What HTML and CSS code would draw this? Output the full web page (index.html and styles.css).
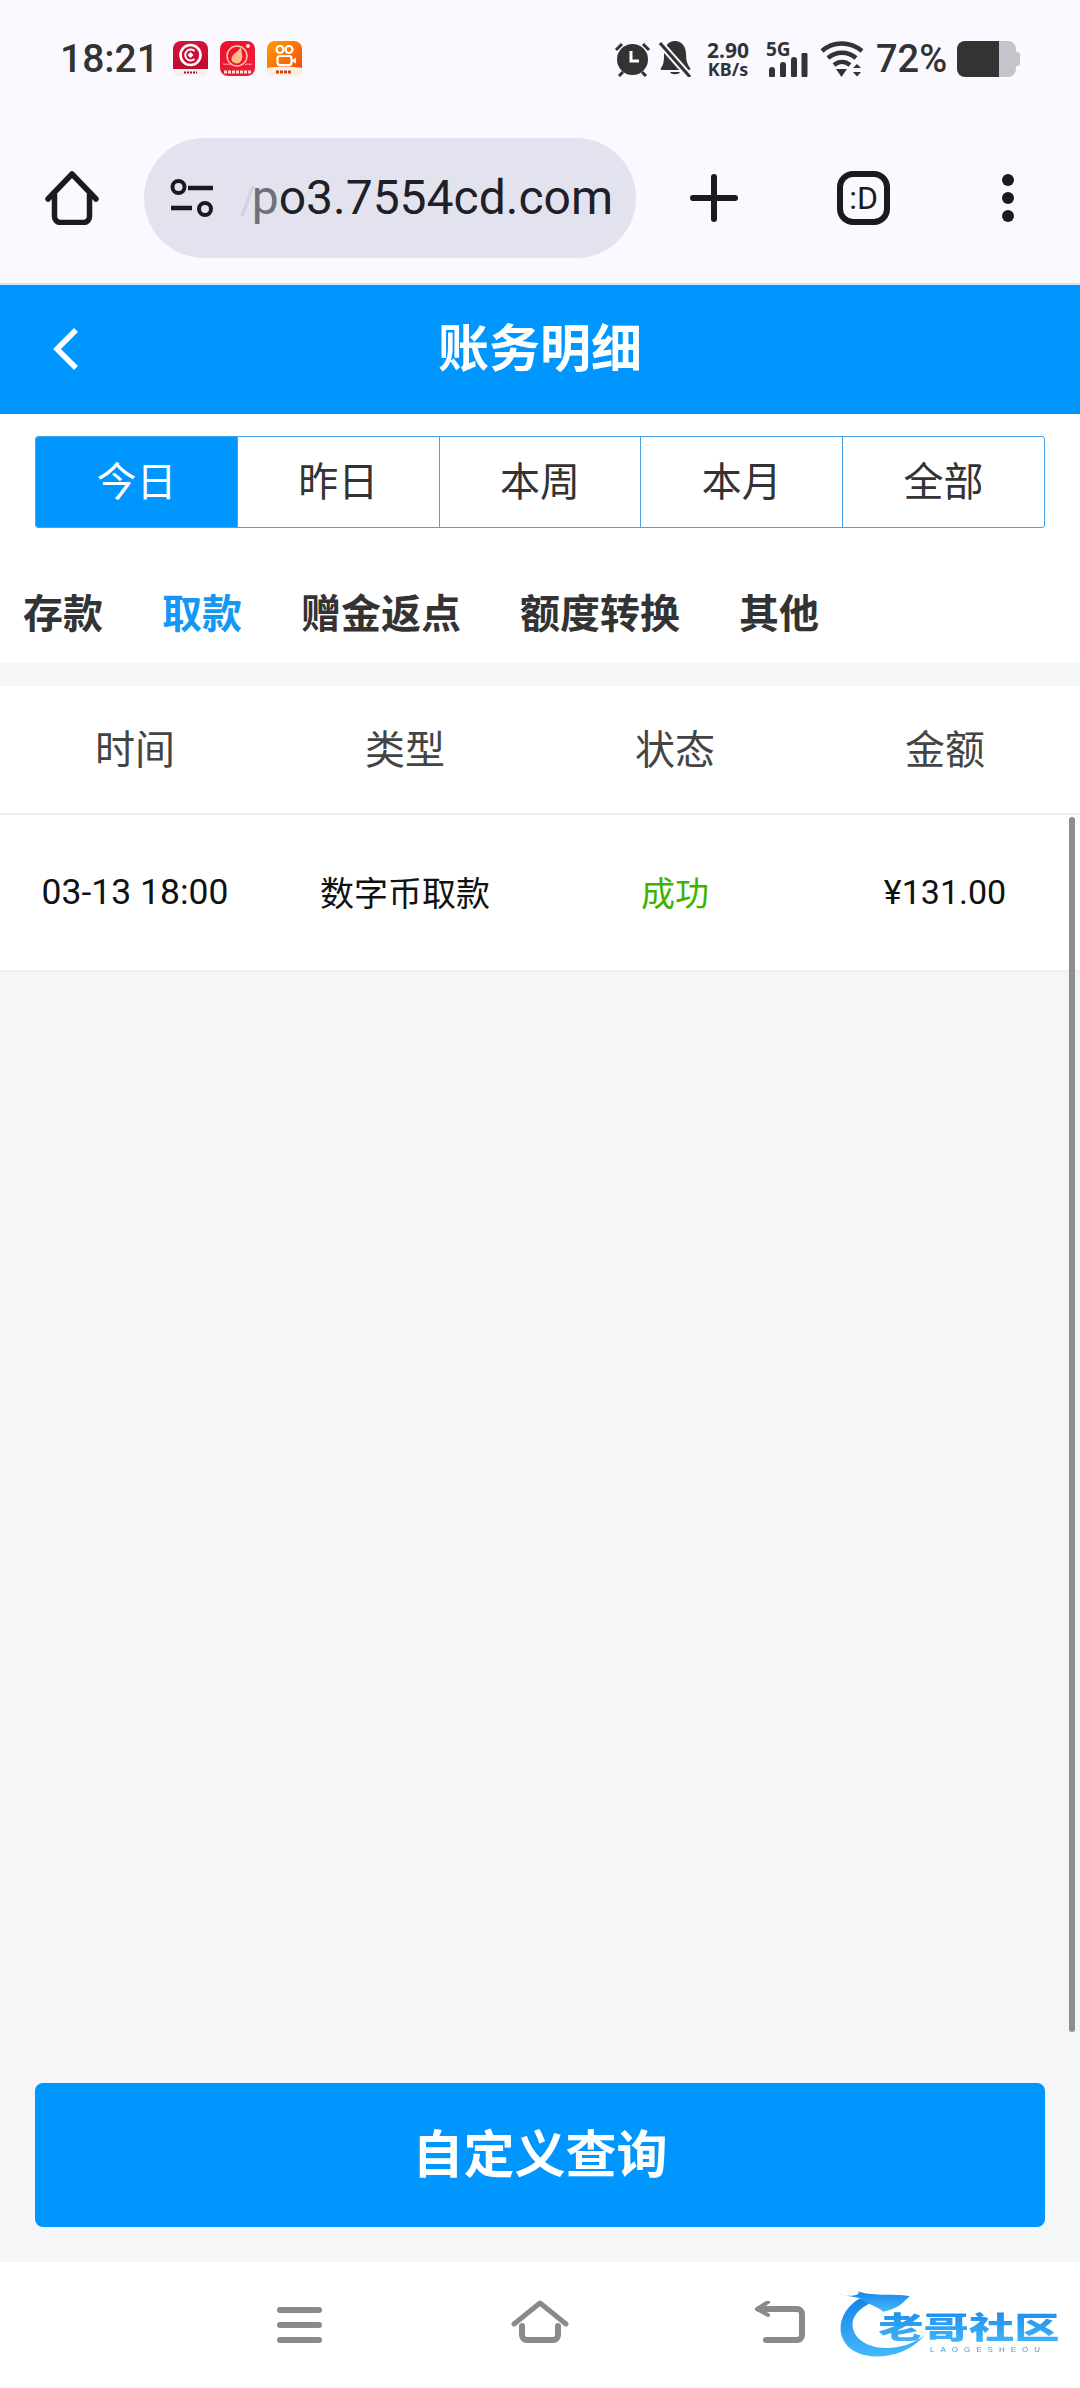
FILE: index.html
```html
<!DOCTYPE html>
<html>
  <head>
    <meta charset="utf-8">
    <link rel="stylesheet" href="styles.css">
  </head>
  <body>
    <div class="phone">
      <div class="chrome">
        <div class="statusbar">
          <span class="time">18:21</span>
          <div class="app-icons">
            <svg class="app-icon" viewBox="0 0 35 35">
              <defs>
                <linearGradient id="g1" x1="0" y1="0" x2="0" y2="1"><stop offset="0" stop-color="#d8123a"/><stop offset="1" stop-color="#b50c2c"/></linearGradient>
                <linearGradient id="g2" x1="0" y1="0" x2="1" y2="1"><stop offset="0" stop-color="#e8132f"/><stop offset="1" stop-color="#f01c3a"/></linearGradient>
                <linearGradient id="g3" x1="0" y1="0" x2="1" y2="1"><stop offset="0" stop-color="#ffa000"/><stop offset="1" stop-color="#f5420f"/></linearGradient>
              </defs>
              <rect width="35" height="35" rx="8" fill="url(#g1)"/>
              <path d="M0 28H35V29a6 6 0 0 1-6 6H6a6 6 0 0 1-6-6Z" fill="#f6f0f0"/>
              <circle cx="17.500" cy="14" r="10" fill="none" stroke="#fff" stroke-width="2.600"/>
              <path d="M21.500 10a5.500 5.500 0 1 0 0 8" fill="none" stroke="#fff" stroke-width="2"/>
              <path d="M17.500 11l3 3-3 3-3-3Z" fill="#fff"/>
              <path d="M11 31.500h13" stroke="#8a2030" stroke-width="2" stroke-dasharray="2 1"/>
            </svg>
            <svg class="app-icon" viewBox="0 0 35 35">
              <rect width="35" height="35" rx="8" fill="url(#g2)"/>
              <circle cx="17" cy="15" r="10" fill="none" stroke="#ffc9a0" stroke-width="1.500"/>
              <path d="M12 20c-2-5 3-8 6-10 1-2 2-3 3-3 1 2 0 4 1 6 1 3 0 7-3 9-2 1-6 0-7-2Z" fill="#ffbe85"/>
              <circle cx="28" cy="5" r="2" fill="#ffd9d0"/>
              <path d="M3 23c3 1 5-1 7 1m22-1c-3 1-5-1-7 1" stroke="#ffb9a8" stroke-width="1" fill="none"/>
              <path d="M4 31h27" stroke="#ffe3d6" stroke-width="3" stroke-dasharray="3 1"/>
            </svg>
            <svg class="app-icon" viewBox="0 0 35 35">
              <rect width="35" height="35" rx="8" fill="url(#g3)"/>
              <path d="M0 27c10-2 25-2 35 0v2a6 6 0 0 1-6 6H6a6 6 0 0 1-6-6Z" fill="#fdeee0"/>
              <circle cx="13" cy="8.500" r="3.500" fill="none" stroke="#fff" stroke-width="2.200"/>
              <circle cx="22" cy="8.500" r="3.500" fill="none" stroke="#fff" stroke-width="2.200"/>
              <rect x="10.500" y="15" width="14" height="9" rx="2.500" fill="none" stroke="#fff" stroke-width="2.200"/>
              <path d="M25 19l4-2.500v6L25 20Z" fill="#fff"/>
              <path d="M9 31h15" stroke="#c8451c" stroke-width="3" stroke-dasharray="3 1"/>
            </svg>
          </div>
          <div class="status-right">
            <svg class="st-alarm" viewBox="0 0 37 36">
              <circle cx="18.500" cy="18.500" r="15.500" fill="#333"/>
              <path d="M2 9 8 3M35 9l-6-6M5 35l4-4M32 35l-4-4" stroke="#333" stroke-width="3"/>
              <path d="M17 10v10h8" fill="none" stroke="#fff" stroke-width="3"/>
            </svg>
            <svg class="st-bell" viewBox="0 0 32 36">
              <path d="M16 0c7 0 11 6 11 13 0 6 1 10 4 14 1 1 0 2-1 2H3c-1 0-2-1-1-2 3-4 3-8 3-14C5 6 9 0 16 0Z" fill="#333"/>
              <path d="M11 31h10c-1 3-9 3-10 0Z" fill="#333"/>
              <path d="M1 2 31 36" stroke="#f9f9ff" stroke-width="7"/>
              <path d="M1 2 31 36" stroke="#333" stroke-width="3"/>
            </svg>
            <div class="speed"><span>2.90</span><span class="speed-unit">KB/s</span></div>
            <div class="signal">
              <span class="five-g">5G</span>
              <svg class="st-bars" viewBox="0 0 40 24">
                <path d="M4 17v5M15 12v10M26 7v15M36.500 2v20" stroke="#333" stroke-width="6" stroke-linecap="round"/>
              </svg>
            </div>
            <svg class="st-wifi" viewBox="0 0 44 36">
              <path d="M2 10C13 0 30 0 42 10M8 17c8-7 20-7 28 0M14 24c5-4 11-4 16 0" fill="none" stroke="#333" stroke-width="4.500"/>
              <path d="M16 28H27L21.500 36ZM33 27l4-4 4 4ZM33 31h8l-4 4.500Z" fill="#333"/>
            </svg>
            <span class="battery-text">72%</span>
            <div class="battery"><div class="battery-fill"></div><div class="battery-empty"></div><div class="battery-nub"></div></div>
          </div>
        </div>
        <div class="toolbar">
          <svg class="tb-home" viewBox="0 0 54 54">
            <path d="M3 28 27 3l24 25" fill="none" stroke="#1b1b1f" stroke-width="5.500" stroke-linecap="round" stroke-linejoin="round"/>
            <path d="M9.500 23v22.500a6 6 0 0 0 6 6h23a6 6 0 0 0 6-6V23" fill="none" stroke="#1b1b1f" stroke-width="5.500"/>
          </svg>
          <div class="url-pill">
            <svg class="tb-tune" viewBox="0 0 44 38">
              <circle cx="8.500" cy="8" r="6" fill="none" stroke="#1b1b1f" stroke-width="4"/>
              <circle cx="35" cy="30" r="6" fill="none" stroke="#1b1b1f" stroke-width="4"/>
              <path d="M18 9H43M1 29H22" stroke="#1b1b1f" stroke-width="4.500"/>
            </svg>
            <span class="url-text"><span class="url-slash">/</span><span class="url-p">p</span>o3.7554cd.com</span>
          </div>
          <svg class="tb-plus" viewBox="0 0 48 48">
            <path d="M24 3V45M3 24H45" stroke="#1b1b1f" stroke-width="6" stroke-linecap="round"/>
          </svg>
          <div class="tab-switch">:D</div>
          <div class="tb-dots"><i></i><i></i><i></i></div>
        </div>
      </div>

      <div class="app-header">
        <svg class="back" viewBox="0 0 27 44">
          <path d="M24 3 5 22l19 19" fill="none" stroke="#fff" stroke-width="5.500"/>
        </svg>
        <h1>账务明细</h1>
      </div>

      <div class="filters">
        <div class="seg">
          <div class="seg-item active">今日</div>
          <div class="seg-item">昨日</div>
          <div class="seg-item">本周</div>
          <div class="seg-item">本月</div>
          <div class="seg-item">全部</div>
        </div>
        <div class="tabs">
          <span>存款</span>
          <span class="on">取款</span>
          <span>赠金返点</span>
          <span>额度转换</span>
          <span>其他</span>
        </div>
      </div>

      <div class="content">
        <div class="table">
          <div class="t-head">
            <span>时间</span><span>类型</span><span>状态</span><span>金额</span>
          </div>
          <div class="t-row">
            <span>03-13 18:00</span><span>数字币取款</span><span class="ok">成功</span><span class="amount">¥131.00</span>
          </div>
        </div>
        <div class="query-btn">自定义查询</div>
      </div>

      <div class="navbar">
        <svg class="nav-menu" viewBox="0 0 45 36">
          <path d="M3 3H42M3 18H42M3 33H42" stroke="#8a8a8a" stroke-width="6" stroke-linecap="round"/>
        </svg>
        <svg class="nav-home" viewBox="0 0 58 43">
          <path d="M3 23 29 2l26 21" fill="none" stroke="#8a8a8a" stroke-width="5" stroke-linecap="round" stroke-linejoin="round" transform="translate(0 1)"/>
          <path d="M11 26V35a5 5 0 0 0 5 5H42a5 5 0 0 0 5-5V26" fill="none" stroke="#8a8a8a" stroke-width="6" stroke-linecap="round"/>
        </svg>
        <svg class="nav-back" viewBox="0 0 50 42">
          <path d="M11 39H42a5 5 0 0 0 5-5V13a5 5 0 0 0-5-5H4" fill="none" stroke="#8a8a8a" stroke-width="6" stroke-linecap="round"/>
          <path d="M13 1 2 8l11 6" fill="none" stroke="#8a8a8a" stroke-width="4" stroke-linecap="round"/>
        </svg>
      </div>

      <div class="scrollbar"></div>

      <svg class="logo" viewBox="0 0 780 354">
        <defs>
          <linearGradient id="lg" x1="0" y1="0" x2="0" y2="1"><stop offset="0" stop-color="#1484ea"/><stop offset="1" stop-color="#45b9fb"/></linearGradient>
        </defs>
        <path d="M120 85C60 120 40 190 90 235c50 40 160 35 225-40-55 45-155 55-200 10-35-40-15-80 35-105Z" fill="url(#lg)"/>
        <path d="M55 72c45 13 75-2 55-10 40 18 110 8 160 16-20 17-30 37-80 47-20-15-50-25-70-40Z" fill="url(#lg)"/>
        <text class="logo-cn" transform="translate(175 203) scale(1.51 1)">老哥社区</text>
        <text class="logo-en" x="330" y="245" textLength="330">LAOGESHEOU</text>
      </svg>
    </div>
  </body>
</html>
```

FILE: styles.css
```css
* {
  box-sizing: border-box;
}
body {
  margin: 0;
  background: #f5f6f8;
  font-family: "Noto Sans CJK SC", Roboto, sans-serif;
}
svg {
  display: block;
  flex: none;
}
.phone {
  position: relative;
  width: 1080px;
  height: 2388px;
  display: flex;
  flex-direction: column;
  overflow: hidden;
}

/* browser chrome */
.chrome {
  background: #f9f9ff;
  height: 285px;
  border-bottom: 2px solid #cfe6fa;
}
.statusbar {
  height: 118px;
  padding: 41px 60px 0;
  display: flex;
  align-items: flex-start;
  color: #333;
}
.time {
  font: 500 39px/36px Roboto, sans-serif;
  width: 113px;
}
.app-icons {
  display: flex;
  gap: 12px;
}
.app-icon {
  width: 35px;
  height: 35px;
}
.status-right {
  margin-left: auto;
  display: flex;
  align-items: flex-start;
}
.st-alarm {
  width: 37px;
  height: 36px;
}
.st-bell {
  width: 32px;
  height: 36px;
  margin-left: 8px;
}
.speed {
  margin-left: 15px;
  width: 44px;
  display: flex;
  flex-direction: column;
  align-items: center;
  font: 700 21px/19px "Noto Sans", sans-serif;
}
.speed-unit {
  font-size: 18px;
  line-height: 19px;
}
.signal {
  margin-left: 16px;
  width: 42px;
  height: 36px;
  position: relative;
}
.five-g {
  position: absolute;
  left: 0;
  top: -1px;
  font: 700 19px/18px "Noto Sans", sans-serif;
}
.st-bars {
  position: absolute;
  left: 2px;
  top: 12px;
  width: 40px;
  height: 24px;
}
.st-wifi {
  width: 44px;
  height: 36px;
  margin-left: 12px;
}
.battery-text {
  margin-left: 12px;
  font: 500 38px/36px Roboto, sans-serif;
  width: 71px;
}
.battery {
  margin-left: 10px;
  width: 63px;
  height: 36px;
  display: flex;
  align-items: center;
}
.battery-fill {
  width: 42px;
  height: 36px;
  background: #333;
  border-radius: 8px 0 0 8px;
}
.battery-empty {
  width: 17px;
  height: 36px;
  background: #c6c4ca;
  border-radius: 0 8px 8px 0;
}
.battery-nub {
  width: 4px;
  height: 14px;
  background: #c6c4ca;
  border-radius: 0 3px 3px 0;
}

.toolbar {
  padding: 20px 0 0 45px;
  display: flex;
  align-items: center;
  height: 140px;
}
.tb-home {
  width: 54px;
  height: 54px;
}
.url-pill {
  margin-left: 45px;
  width: 492px;
  height: 120px;
  border-radius: 60px;
  background: #e2e3ef;
  padding-left: 26px;
  display: flex;
  align-items: center;
  overflow: hidden;
}
.tb-tune {
  width: 44px;
  height: 38px;
}
.url-text {
  margin-left: 26px;
  font: 400 48px/1 Roboto, sans-serif;
  color: #1f2026;
  white-space: nowrap;
}
.url-slash {
  color: #d0d1dc;
  font-size: 38px;
  margin-right: -4px;
}
.url-p {
  color: #6f7079;
}
.tb-plus {
  margin-left: 54px;
  width: 48px;
  height: 48px;
}
.tab-switch {
  margin-left: 99px;
  width: 53px;
  height: 54px;
  border: 6px solid #1b1b1f;
  border-radius: 16px;
  font: 400 32px/42px Roboto, sans-serif;
  text-align: center;
  color: #1b1b1f;
}
.tb-dots {
  margin-left: 112px;
  display: flex;
  flex-direction: column;
  gap: 6px;
}
.tb-dots i {
  display: block;
  width: 12px;
  height: 12px;
  border-radius: 50%;
  background: #1b1b1f;
}

/* app */
.app-header {
  position: relative;
  height: 129px;
  background: #0096ff;
  display: flex;
  align-items: center;
  justify-content: center;
}
.app-header h1 {
  margin: 0;
  padding-bottom: 8px;
  color: #fff;
  font-size: 51px;
  font-weight: 700;
  line-height: 1;
}
.back {
  position: absolute;
  left: 52px;
  top: 42px;
  width: 27px;
  height: 44px;
}

.filters {
  background: #fff;
  height: 249px;
  padding-top: 22px;
}
.seg {
  margin: 0 35px;
  display: flex;
  height: 92px;
  border: 1.500px solid #4aa3e6;
  border-radius: 3px;
  overflow: hidden;
}
.seg-item {
  flex: 1;
  display: flex;
  align-items: center;
  justify-content: center;
  padding-bottom: 6px;
  font-size: 40px;
  color: #333;
  border-right: 1.500px solid #4aa3e6;
}
.seg-item:last-child {
  border-right: none;
}
.seg-item.active {
  background: #0096ff;
  color: #fff;
}
.tabs {
  margin-top: 55px;
  padding-left: 23px;
  display: flex;
  gap: 59px;
  font-size: 40px;
  font-weight: 700;
  line-height: 56px;
  color: #333;
}
.tabs .on {
  color: #1497f5;
}

.content {
  flex: 1;
  padding-top: 23px;
  display: flex;
  flex-direction: column;
  background: #f5f6f8;
}
.table {
  flex: 1;
}
.t-head,
.t-row {
  display: grid;
  grid-template-columns: repeat(4, 1fr);
  align-items: center;
  text-align: center;
  background: #fff;
  border-bottom: 2px solid #f0f0f2;
}
.t-head {
  height: 129px;
  padding-bottom: 6px;
  font-size: 40px;
  color: #444;
}
.t-row {
  height: 157px;
  padding-bottom: 2px;
  font-size: 34px;
  color: #111;
}
.t-row span:first-child {
  font-family: Roboto, "Noto Sans CJK SC", sans-serif;
  font-size: 35.500px;
}
.t-row .amount {
  font-family: Roboto, "Noto Sans CJK SC", sans-serif;
  font-size: 34px;
}
.t-row .ok {
  color: #3cb400;
}
.query-btn {
  margin: 0 35px 35px;
  height: 144px;
  padding-bottom: 8px;
  border-radius: 8px;
  background: #0096ff;
  color: #fff;
  font-size: 51px;
  font-weight: 700;
  display: flex;
  align-items: center;
  justify-content: center;
}

.navbar {
  height: 126px;
  background: #fff;
  padding-left: 277px;
  display: flex;
  align-items: flex-start;
}
.nav-menu {
  width: 45px;
  height: 36px;
  margin-top: 45px;
}
.nav-home {
  width: 58px;
  height: 43px;
  margin: 38px 0 0 189px;
}
.nav-back {
  width: 50px;
  height: 42px;
  margin: 39px 0 0 186px;
}

.scrollbar {
  position: absolute;
  left: 1069px;
  top: 817px;
  width: 6px;
  height: 1215px;
  border-radius: 3px;
  background: #8e8e90;
}
.logo {
  position: absolute;
  left: 820px;
  top: 2270px;
  width: 260px;
  height: 118px;
  filter: blur(0.5px);
}
.logo-cn {
  font-family: "Noto Sans CJK SC", sans-serif;
  font-size: 90px;
  font-weight: 900;
  fill: url(#lg);
}
.logo-en {
  font-family: "Liberation Sans", sans-serif;
  font-size: 24px;
  fill: #3a9cf0;
}
```
